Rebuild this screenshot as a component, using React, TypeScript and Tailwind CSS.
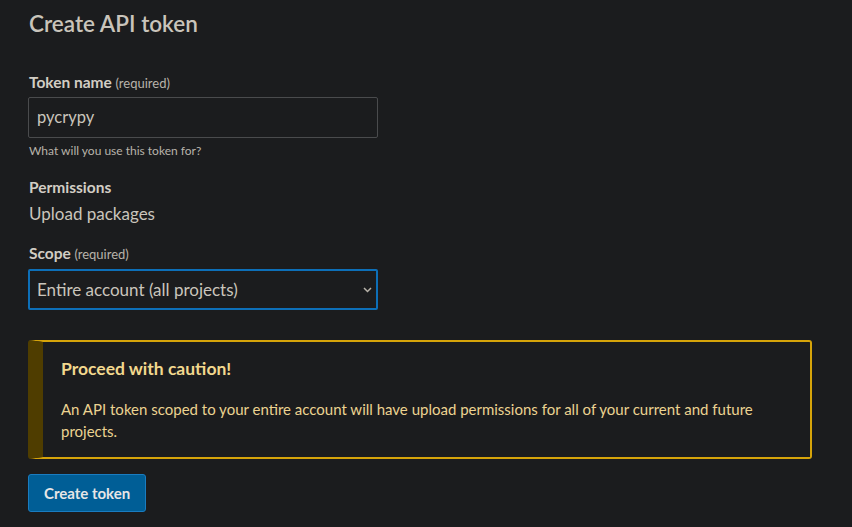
import React from "react";

export default function App() {
  return (
    <div
      className="min-h-[527px] w-full bg-[#1b1c1e] text-[#cac5bc]"
      style={{ fontFamily: "Lato, 'Noto Sans', sans-serif" }}
    >
      <div className="pl-[28px] pt-[8px] w-[812px]">
        <h1 className="text-[22.5px] leading-[32px] font-semibold text-[#c9c4bb] ml-[1px]">
          Create API token
        </h1>

        <div className="mt-[32px] text-[14px] leading-[20px] ml-[1px]">
          <span className="text-[15.5px] font-bold text-[#d2cdc4]">Token name</span>{" "}
          <span className="text-[13px] text-[#b8b3aa]">(required)</span>
        </div>
        <div className="mt-[4px] w-[350px] h-[41px] border border-[#4a4b4d] rounded-[2px] flex items-center px-[8px] text-[16.5px] text-[#cac5bc]">
          pycrypy
        </div>
        <div className="mt-[5px] text-[12px] leading-[16px] text-[#b8b3aa] ml-[1px]">
          What will you use this token for?
        </div>

        <div className="mt-[18px] text-[15.5px] leading-[20px] font-bold text-[#d2cdc4] ml-[1px]">
          Permissions
        </div>
        <div className="mt-[5px] text-[17px] leading-[24px] text-[#cac5bc] ml-[1px]">
          Upload packages
        </div>

        <div className="mt-[17px] text-[14px] leading-[20px] ml-[1px]">
          <span className="text-[15.5px] font-bold text-[#d2cdc4]">Scope</span>{" "}
          <span className="text-[13px] text-[#b8b3aa]">(required)</span>
        </div>
        <div className="mt-[5px] w-[350px] h-[41px] border-2 border-[#0d6fb8] rounded-[2px] flex items-center justify-between pl-[7px] pr-[4px] text-[17px] text-[#cac5bc]">
          <span>Entire account (all projects)</span>
          <svg width="9" height="6" viewBox="0 0 9 6" fill="none">
            <path d="M1 1l3.5 3.5L8 1" stroke="#b8b3aa" strokeWidth="1.5" />
          </svg>
        </div>

        <div className="mt-[30px] w-[784px] h-[119px] border-2 border-[#d6a40a] border-l-[15px] border-l-[#4f3d00] rounded-[3px] pl-[18px] pr-[16px] pt-[15px]">
          <div className="text-[17.5px] leading-[24px] font-bold text-[#f2d88e]">
            Proceed with caution!
          </div>
          <p className="mt-[17px] text-[15px] leading-[22px] text-[#ecd391]">
            An API token scoped to your entire account will have upload permissions for all of your current and future projects.
          </p>
        </div>

        <button className="mt-[15px] h-[38px] px-[15px] bg-[#005e96] border border-[#1a7cc0] rounded-[3px] text-[15px] font-bold text-[#e6e6e6]">
          Create token
        </button>
      </div>
    </div>
  );
}
